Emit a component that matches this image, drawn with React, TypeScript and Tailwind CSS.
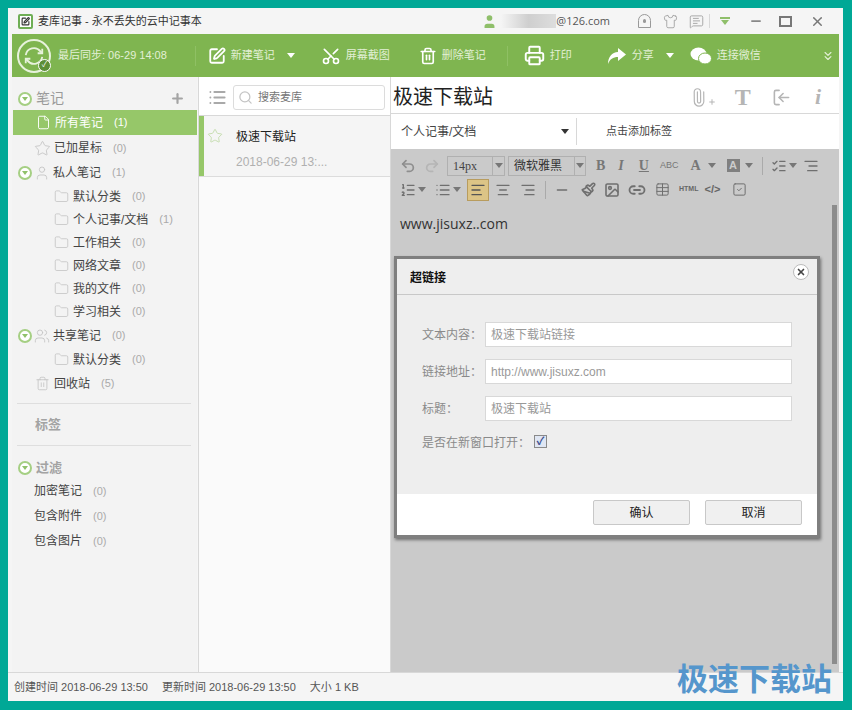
import { ReactNode } from "react";
import {
  AlignCenter,
  AlignLeft,
  AlignRight,
  ChevronsDown,
  File,
  Folder,
  Link2,
  List,
  ListOrdered,
  MessageSquareText,
  Minus,
  Paperclip,
  Plus,
  Printer,
  Redo2,
  Scissors,
  Search,
  Shirt,
  SquareCheck,
  SquarePen,
  Star,
  Table,
  Trash2,
  Undo2,
  User,
  Users,
  X,
  Image,
  Paintbrush,
  ListChecks,
  LogIn,
} from "lucide-react";

const FONT = "font-['Liberation_Sans','Noto_Sans_CJK_SC',sans-serif]";

function Caret({ className = "border-t-white" }: { className?: string }) {
  return <span className={`inline-block h-0 w-0 border-x-[4px] border-t-[5px] border-x-transparent ${className}`} />;
}

function Collapse() {
  return (
    <span className="flex h-[14px] w-[14px] shrink-0 items-center justify-center rounded-full border-2 border-[#a5cf83] bg-white">
      <span className="h-0 w-0 border-x-[3px] border-t-[4px] border-x-transparent border-t-[#8fc16a]" />
    </span>
  );
}

function Count({ n, className = "" }: { n: number; className?: string }) {
  return <span className={`text-[11px] text-[#aaa] ${className}`}>({n})</span>;
}

function FolderRow({ label, n }: { label: string; n: number }) {
  return (
    <div className="flex h-[23px] items-center pl-[41px] text-[12px] text-[#444]">
      <Folder size={15} strokeWidth={1.3} className="mr-[4px] text-[#c4c4c4]" />
      <span>{label}</span>
      <Count n={n} className="ml-[11px]" />
    </div>
  );
}

function ToolBtn({ icon, label, caret, cls }: { icon: ReactNode; label: string; caret?: boolean; cls: string }) {
  return (
    <div className={`flex items-center text-[11px] text-[#e3f0d6] ${cls}`}>
      {icon}
      <span className="ml-[5px]">{label}</span>
      {caret && <span className="ml-[12px] flex"><Caret /></span>}
    </div>
  );
}

function Sidebar() {
  return (
    <aside className="flex w-[185px] shrink-0 flex-col bg-[#f3f3f3] pl-[1px]">
      <div className="flex h-[33px] items-end justify-between pb-[1px] pl-[5px] pr-[12px]">
        <div className="flex items-center gap-[4px] text-[14px] text-[#9a9a9a]">
          <Collapse />
          <span>笔记</span>
        </div>
        <Plus size={15} strokeWidth={3.5} className="mb-[3px] text-[#a4a4a4]" />
      </div>
      <div className="flex h-[25px] items-center bg-[#96c769] pl-[23px] text-[12px] text-white">
        <File size={15} strokeWidth={1.5} className="mr-[4px]" />
        <span>所有笔记</span>
        <span className="ml-[11px] text-[11px]">(1)</span>
      </div>
      <div className="mt-[1px] flex h-[24px] items-center pl-[21px] text-[12px] text-[#444]">
        <Star size={17} strokeWidth={1.1} className="mr-[3px] text-[#bdbdbd]" />
        <span>已加星标</span>
        <Count n={0} className="ml-[11px]" />
      </div>
      <div className="flex h-[25px] items-center pl-[5px] text-[12px] text-[#444]">
        <Collapse />
        <User size={16} strokeWidth={1.3} className="ml-[2px] mr-[3px] text-[#c4c4c4]" />
        <span>私人笔记</span>
        <Count n={1} className="ml-[11px]" />
      </div>
      <FolderRow label="默认分类" n={0} />
      <FolderRow label="个人记事/文档" n={1} />
      <FolderRow label="工作相关" n={0} />
      <FolderRow label="网络文章" n={0} />
      <FolderRow label="我的文件" n={0} />
      <FolderRow label="学习相关" n={0} />
      <div className="flex h-[25px] items-center pl-[5px] text-[12px] text-[#444]">
        <Collapse />
        <Users size={16} strokeWidth={1.3} className="ml-[2px] mr-[3px] text-[#c4c4c4]" />
        <span>共享笔记</span>
        <Count n={0} className="ml-[11px]" />
      </div>
      <FolderRow label="默认分类" n={0} />
      <div className="flex h-[25px] items-center pl-[22px] text-[12px] text-[#444]">
        <Trash2 size={15} strokeWidth={1.2} className="mr-[4px] text-[#bdbdbd]" />
        <span>回收站</span>
        <Count n={5} className="ml-[11px]" />
      </div>
      <div className="ml-[4px] mr-[6px] mt-[7px] border-t border-[#dedede]" />
      <div className="flex h-[41px] items-center pl-[22px] text-[13px] font-bold text-[#a3a3a3]">标签</div>
      <div className="ml-[4px] mr-[6px] border-t border-[#dedede]" />
      <div className="mt-[12px] flex items-center gap-[4px] pl-[5px] font-bold text-[#a3a3a3]">
        <Collapse />
        <span className="text-[13px]">过滤</span>
      </div>
      <div className="mt-[1px] flex flex-col pl-[21px] text-[12px] text-[#444]">
        {["加密笔记", "包含附件", "包含图片"].map((t) => (
          <div key={t} className="flex h-[25px] items-center">
            <span>{t}</span>
            <Count n={0} className="ml-[11px]" />
          </div>
        ))}
      </div>
    </aside>
  );
}

function NoteList() {
  return (
    <section className="ml-[1px] flex w-[193px] shrink-0 flex-col border-x border-[#d8d8d8] bg-[#fafafa]">
      <div className="flex h-[39px] items-center border-b border-[#d8d8d8] bg-white pl-[9px] pt-[2px]">
        <List size={19} strokeWidth={2.4} className="text-[#a9a9a9]" />
        <div className="ml-[6px] flex h-[25px] w-[152px] items-center rounded-[3px] border border-[#dcdcdc] pl-[4px] text-[11px] text-[#777]">
          <Search size={15} strokeWidth={2} className="mr-[5px] text-[#c4c4c4]" />
          搜索麦库
        </div>
      </div>
      <div className="flex h-[61px] border-b border-[#dcdcdc] bg-[#f5f5f5]">
        <div className="w-[5px] bg-[#96c769]" />
        <Star size={16} strokeWidth={1.2} className="ml-[3px] mt-[12px] text-[#bcd8a2]" />
        <div className="ml-[13px] pt-[12px]">
          <div className="text-[12px] leading-[18px] text-[#222]">极速下载站</div>
          <div className="mt-[8px] text-[12px] leading-[16px] text-[#b0b0b0]">2018-06-29 13:...</div>
        </div>
      </div>
    </section>
  );
}

function Field({ label, value, mt }: { label: string; value: string; mt: string }) {
  return (
    <div className={`flex items-center ${mt}`}>
      <span className="w-[63px] text-[12px] text-[#8a8a8a]">{label}</span>
      <div className="flex h-[25px] w-[307px] items-center border border-[#d8d8d8] bg-white pl-[5px] text-[12px] text-[#999]">
        {value}
      </div>
    </div>
  );
}

function LinkDialog() {
  return (
    <div className="absolute left-[3px] top-[179px] flex h-[282px] w-[426px] flex-col border-[3px] border-[#7f7f7f] bg-white shadow-[1px_2px_3px_rgba(0,0,0,0.45)]">
      <div className="relative flex h-[36px] items-center border-b border-[#c8c8c8] bg-[#eeeeee] pl-[13px] pt-[3px] text-[12px] font-bold text-[#111]">
        超链接
        <span className="absolute right-[8px] top-[5px] flex h-[16px] w-[16px] items-center justify-center rounded-full border border-[#bbb] bg-white">
          <X size={10} strokeWidth={4} className="text-[#444]" />
        </span>
      </div>
      <div className="h-[199px] bg-[#eeeeee] pl-[25px] pt-[27px]">
        <Field label="文本内容：" value="极速下载站链接" mt="" />
        <Field label="链接地址：" value="http://www.jisuxz.com" mt="mt-[12px]" />
        <Field label="标题：" value="极速下载站" mt="mt-[12px]" />
        <div className="mt-[13px] flex items-center text-[12px] text-[#8a8a8a]">
          是否在新窗口打开：
          <span className="-mt-[4px] ml-[4px] flex h-[13px] w-[13px] items-center justify-center border border-[#8a8a8a] bg-[#dfe6f3] text-[11px] leading-none font-bold text-[#3b4f8f]">
            ✓
          </span>
        </div>
      </div>
      <div className="flex flex-1 items-start justify-end gap-[15px] pr-[15px] pt-[6px]">
        {["确认", "取消"].map((t) => (
          <div
            key={t}
            className="flex h-[25px] w-[97px] items-center justify-center rounded-[2px] border border-[#c8c8c8] bg-[#f0f0f0] text-[12px] text-[#222]"
          >
            {t}
          </div>
        ))}
      </div>
    </div>
  );
}

function Editor() {
  const ic = "text-[#6f6f6f]";
  return (
    <section className="relative flex min-w-0 flex-1 flex-col bg-[#cacaca]">
      <div className="flex h-[37px] items-center border-b border-[#d8d8d8] bg-white pl-[2px] pt-[4px]">
        <span className="text-[20px] text-[#222]">极速下载站</span>
        <div className="ml-auto flex items-center pr-[18px] text-[#b5b5b5]">
          <Paperclip size={19} strokeWidth={1.5} className="-rotate-45" />
          <Plus size={8} strokeWidth={3} className="mt-[10px]" />
          <span className="ml-[19px] font-['Liberation_Serif',serif] text-[24px] font-bold leading-none">T</span>
          <LogIn size={19} strokeWidth={2} className="ml-[21px] rotate-180" />
          <span className="ml-[24px] font-['Liberation_Serif',serif] text-[22px] font-bold italic leading-none">i</span>
        </div>
      </div>
      <div className="flex h-[35px] items-center bg-white text-[12px] text-[#444]">
        <div className="flex h-[27px] w-[186px] items-center justify-between border-r border-[#d8d8d8] pl-[10px] pr-[7px]">
          个人记事/文档
          <Caret className="border-t-[#333]" />
        </div>
        <span className="ml-[29px] text-[11px]">点击添加标签</span>
      </div>
      <div className="flex h-[56px] flex-col gap-[3px] pl-[9px] pt-[6px]">
        <div className="flex h-[21px] items-center">
          <Undo2 size={16} strokeWidth={2.6} className="text-[#8e8e8e]" />
          <Redo2 size={16} strokeWidth={2.6} className="ml-[8px] text-[#b5b5b5]" />
          <div className="ml-[7px] flex h-[20px] w-[58px] items-center border border-[#b0b0b0] font-['Liberation_Serif',serif] text-[12px] text-[#444]">
            <span className="flex-1 pl-[5px]">14px</span>
            <span className="flex h-full w-[12px] items-center justify-center border-l border-[#b0b0b0]">
              <Caret className="border-t-[#777]" />
            </span>
          </div>
          <div className="ml-[3px] flex h-[20px] w-[78px] items-center border border-[#b0b0b0] text-[12px] text-[#333]">
            <span className="flex-1 pl-[5px]">微软雅黑</span>
            <span className="flex h-full w-[11px] items-center justify-center border-l border-[#b0b0b0]">
              <Caret className="border-t-[#777]" />
            </span>
          </div>
          <span className="ml-[10px] font-['Liberation_Serif',serif] text-[14px] font-bold text-[#777]">B</span>
          <span className="ml-[13px] font-['Liberation_Serif',serif] text-[14px] font-bold italic text-[#777]">I</span>
          <span className="ml-[15px] font-['Liberation_Serif',serif] text-[14px] font-bold text-[#777] underline">U</span>
          <span className="ml-[11px] text-[9px] text-[#777]">ABC</span>
          <span className="ml-[12px] font-['Liberation_Serif',serif] text-[14px] font-bold text-[#777]">A</span>
          <span className="ml-[7px] flex"><Caret className="border-t-[#777]" /></span>
          <span className="ml-[11px] flex h-[13px] w-[13px] items-center justify-center bg-[#808080] text-[11px] font-bold leading-none text-[#ccc]">A</span>
          <span className="ml-[5px] flex"><Caret className="border-t-[#777]" /></span>
          <span className="ml-[9px] h-[18px] border-l border-[#aaa]" />
          <ListChecks size={16} className={`ml-[8px] ${ic}`} />
          <span className="ml-[2px] flex"><Caret className="border-t-[#777]" /></span>
          <AlignRight size={16} className={`ml-[6px] ${ic}`} />
        </div>
        <div className="flex h-[21px] items-center">
          <ListOrdered size={16} className={ic} />
          <span className="ml-[2px] flex"><Caret className="border-t-[#777]" /></span>
          <List size={16} className={`ml-[9px] ${ic}`} />
          <span className="ml-[2px] flex"><Caret className="border-t-[#777]" /></span>
          <span className="ml-[6px] flex h-[22px] w-[22px] items-center justify-center border border-[#b89c5e] bg-[#dcc486]">
            <AlignLeft size={16} className="text-[#555]" />
          </span>
          <AlignCenter size={16} className={`ml-[6px] ${ic}`} />
          <AlignRight size={16} className={`ml-[9px] ${ic}`} />
          <span className="ml-[9px] h-[18px] border-l border-[#aaa]" />
          <Minus size={16} className={`ml-[8px] ${ic}`} />
          <Paintbrush size={15} strokeWidth={2.6} className={`ml-[11px] ${ic}`} />
          <Image size={16} strokeWidth={2.4} className={`ml-[8px] ${ic}`} />
          <Link2 size={18} strokeWidth={2.4} className={`ml-[8px] ${ic}`} />
          <Table size={15} strokeWidth={1.6} className={`ml-[9px] ${ic}`} />
          <span className="ml-[9px] text-[7px] font-bold text-[#666]">HTML</span>
          <span className="ml-[6px] text-[11px] font-bold text-[#666]">&lt;/&gt;</span>
          <SquareCheck size={15} strokeWidth={1.6} className={`ml-[12px] ${ic}`} />
        </div>
      </div>
      <div className="relative flex-1">
        <div className="pl-[9px] pt-[8px] font-['Open_Sans',sans-serif] text-[14px] text-[#333]">www.jisuxz..com</div>
        <div className="absolute bottom-[8px] right-[2px] top-0 w-[5px] bg-[#8c8c8c]" />
      </div>
      <LinkDialog />
    </section>
  );
}

export default function App() {
  return (
    <div className={`relative h-[710px] w-[852px] overflow-hidden bg-[#00a896] p-[8px] ${FONT}`}>
      <div className="flex h-[693px] w-[835px] flex-col rounded-[3px] bg-[#f5f5f5] px-[4px]">
        <header className="-mx-[4px] flex h-[26px] items-center bg-[#f5f5f5] pl-[10px] pr-[18px]">
          <span className="flex h-[15px] w-[15px] shrink-0 items-center justify-center rounded-[2px] border-2 border-[#6fae55] bg-white">
            <SquarePen size={9} strokeWidth={3} className="text-[#333]" />
          </span>
          <span className="ml-[5px] shrink-0 whitespace-nowrap text-[11px] text-[#333]">麦库记事 - 永不丢失的云中记事本</span>
          <User size={17} fill="#8fbf6a" strokeWidth={0} className="ml-auto shrink-0" />
          <span className="ml-[3px] h-[14px] w-[55px] bg-gradient-to-r from-[#f5f5f5] via-[#cfcfcf] to-[#ddd]" />
          <span className="font-['Open_Sans',sans-serif] text-[11px] text-[#555]">@126.com</span>
          <span className="ml-[28px] flex h-[14px] w-[13px] items-center justify-center rounded-t-full rounded-b-[3px] border border-[#999]">
            <span className="h-[4px] w-[3px] rounded-full bg-[#999]" />
          </span>
          <Shirt size={15} strokeWidth={1.3} className="ml-[12px] text-[#999]" />
          <MessageSquareText size={15} strokeWidth={1.3} className="ml-[11px] text-[#999]" />
          <span className="ml-[5px] h-[14px] border-l border-[#d8d8d8]" />
          <span className="ml-[10px] flex flex-col items-center gap-[1px]">
            <span className="h-[2px] w-[10px] bg-[#8fbf6a]" />
            <Caret className="border-t-[#8fbf6a]" />
          </span>
          <Minus size={14} strokeWidth={3} className="ml-[19px] text-[#888]" />
          <span className="ml-[16px] h-[11px] w-[13px] border-2 border-[#777]" />
          <X size={15} strokeWidth={2.4} className="ml-[18px] text-[#777]" />
        </header>

        <div className="flex h-[43px] items-center bg-[#7fb550]">
          <div className="relative ml-[5px] flex h-[34px] w-[34px] items-center justify-center rounded-full border-2 border-[#e7f2dc]">
            <svg width="22" height="22" viewBox="0 0 24 24" fill="none" stroke="#e7f2dc" strokeWidth="2">
              <path d="M3 11a9 9 0 0 1 16-4l2 2M21 13a9 9 0 0 1-16 4l-2-2" />
              <path d="M21 4v5h-5M3 20v-5h5" />
            </svg>
            <span className="absolute -bottom-[1px] -right-[2px] flex h-[13px] w-[13px] items-center justify-center rounded-full border border-white bg-[#5d8f37] text-[8px] text-white">✓</span>
          </div>
          <span className="ml-[7px] text-[11px] text-[#e3f0d6]">最后同步: 06-29 14:08</span>
          <span className="ml-[28px] h-[20px] border-l border-[#8fc064]" />
          <ToolBtn
            cls="ml-[12px]"
            icon={<SquarePen size={18} strokeWidth={2.4} className="text-white" />}
            label="新建笔记"
            caret
          />
          <ToolBtn
            cls="ml-[26px]"
            icon={<Scissors size={20} strokeWidth={2} className="-rotate-90 text-white" />}
            label="屏幕截图"
          />
          <ToolBtn
            cls="ml-[29px]"
            icon={<Trash2 size={18} strokeWidth={2.2} className="text-white" />}
            label="删除笔记"
          />
          <span className="ml-[21px] h-[20px] border-l border-[#8fc064]" />
          <ToolBtn
            cls="ml-[16px]"
            icon={<Printer size={21} strokeWidth={2.2} className="text-white" />}
            label="打印"
          />
          <ToolBtn
            cls="ml-[35px]"
            icon={
              <svg width="20" height="18" viewBox="0 0 20 18" fill="white">
                <path d="M11 1l8 6.5-8 6.5v-4C6 10 3 12 1 17 1 10 5 5 11 5z" />
              </svg>
            }
            label="分享"
            caret
          />
          <ToolBtn
            cls="ml-[16px]"
            icon={
              <svg width="22" height="18" viewBox="0 0 22 18" fill="white">
                <ellipse cx="8.5" cy="7" rx="8" ry="6.5" />
                <ellipse cx="15" cy="11.5" rx="6.5" ry="5.5" stroke="#7fb550" />
              </svg>
            }
            label="连接微信"
          />
          <ChevronsDown size={14} strokeWidth={2} className="ml-auto mr-[4px] text-[#e3f0d6]" />
        </div>

        <main className="flex min-h-0 flex-1">
          <Sidebar />
          <NoteList />
          <Editor />
        </main>

        <footer className="-mx-[4px] flex h-[29px] items-center border-t border-[#d8d8d8] bg-[#f5f5f5] pl-[6px] text-[11px] text-[#555]">
          <span>创建时间 2018-06-29 13:50</span>
          <span className="ml-[14px]">更新时间 2018-06-29 13:50</span>
          <span className="ml-[14px]">大小 1 KB</span>
        </footer>
      </div>
      <span className="absolute left-[677px] top-[660px] text-[31px] font-bold leading-[40px] text-[#5596cc]">极速下载站</span>
    </div>
  );
}
